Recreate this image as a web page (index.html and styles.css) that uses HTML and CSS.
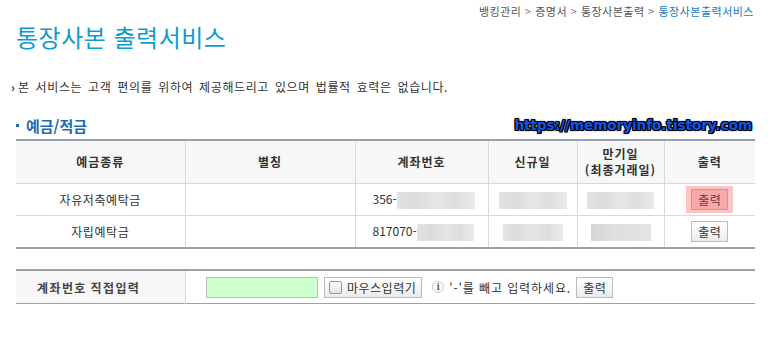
FILE: index.html
```html
<!DOCTYPE html>
<html lang="ko">
<head>
    <meta charset="UTF-8">
    <meta name="viewport" content="width=device-width, initial-scale=1.0">
    <link rel="stylesheet" href="styles.css">
    <title>통장사본 출력서비스</title>
</head>
<body>
    <div class="page">
        <!-- 경로 -->
        <div class="breadcrumb">
            뱅킹관리 <span class="sep">&gt;</span> 증명서 <span class="sep">&gt;</span> 통장사본출력 <span class="sep">&gt;</span> <span class="current">통장사본출력서비스</span>
        </div>

        <h1 class="title">통장사본 출력서비스</h1>

        <p class="notice"><span class="arrow">›</span>본 서비스는 고객 편의를 위하여 제공해드리고 있으며 법률적 효력은 없습니다.</p>

        <div class="section-head">
            <h2 class="section-title"><span class="dot"></span>예금/적금</h2>
            <span class="watermark">https://memoryinfo.tistory.com</span>
        </div>

        <!-- 계좌 목록 -->
        <table class="account-table">
            <colgroup>
                <col style="width:169px">
                <col style="width:170px">
                <col style="width:133px">
                <col style="width:89px">
                <col style="width:87px">
                <col>
            </colgroup>
            <thead>
                <tr>
                    <th>예금종류</th>
                    <th>별칭</th>
                    <th>계좌번호</th>
                    <th>신규일</th>
                    <th>만기일<br>(최종거래일)</th>
                    <th>출력</th>
                </tr>
            </thead>
            <tbody>
                <tr>
                    <td>자유저축예탁금</td>
                    <td></td>
                    <td class="acct">356-<span class="blur" style="width:78px"></span></td>
                    <td><span class="blur" style="width:68px"></span></td>
                    <td><span class="blur" style="width:67px"></span></td>
                    <td><span class="hilite"><button type="button" class="btn btn-on">출력</button></span></td>
                </tr>
                <tr>
                    <td>자립예탁금</td>
                    <td></td>
                    <td class="acct">817070-<span class="blur" style="width:57px"></span></td>
                    <td><span class="blur" style="width:60px"></span></td>
                    <td><span class="blur dark" style="width:60px"></span></td>
                    <td><button type="button" class="btn">출력</button></td>
                </tr>
            </tbody>
        </table>

        <!-- 직접입력 -->
        <table class="direct-table">
            <tr>
                <th>계좌번호 직접입력</th>
                <td>
                    <div class="direct-row">
                        <input type="text" class="acct-input">
                        <label class="btn mouse-btn"><span class="check"></span>마우스입력기</label>
                        <span class="info">i</span>
                        <span class="hint">'-'를 빼고 입력하세요.</span>
                        <button type="button" class="btn">출력</button>
                    </div>
                </td>
            </tr>
        </table>
    </div>
</body>
</html>
```

FILE: styles.css
```css
body {
    margin: 0;
    padding: 0;
    background-color: #fff;
    font-family: "Noto Sans CJK KR", "Noto Sans", sans-serif;
    color: #333;
}

.page {
    width: 739px;
    padding: 0 17px 0 16px;
}

.breadcrumb {
    height: 20px;
    line-height: 20px;
    padding-top: 1px;
    padding-right: 1px;
    text-align: right;
    font-size: 11px;
    letter-spacing: 0.5px;
    color: #555;
}

.breadcrumb .sep {
    color: #777;
}

.breadcrumb .current {
    color: #1a78b8;
}

.title {
    margin: 0;
    font-size: 24px;
    font-weight: normal;
    letter-spacing: 0.5px;
    line-height: 32px;
    color: #0c9ccf;
}

.notice {
    margin: 26px 0 0 -5px;
    font-size: 12px;
    line-height: 16px;
    letter-spacing: 0.6px;
    word-spacing: 2px;
    color: #333;
}

.notice .arrow {
    display: inline-block;
    width: 7px;
    font-weight: bold;
}

.section-head {
    display: flex;
    justify-content: space-between;
    align-items: center;
    margin-top: 19px;
    height: 22px;
}

.section-title {
    margin: 0;
    font-size: 15px;
    font-weight: bold;
    color: #1d6cb4;
    display: flex;
    align-items: center;
}

.section-title .dot {
    width: 3px;
    height: 3px;
    background-color: #1d6cb4;
    margin-right: 7px;
}

.watermark {
    font-family: "DejaVu Sans", sans-serif;
    font-weight: bold;
    font-size: 13.5px;
    color: #0a56f0;
    margin-right: 3px;
    text-shadow: 1px 0 0 #000, -1px 0 0 #000, 0 1px 0 #000, 0 -1px 0 #000,
                 1px 1px 0 #000, -1px -1px 0 #000, 1px -1px 0 #000, -1px 1px 0 #000,
                 0 0 3px #000;
}

table {
    width: 100%;
    border-collapse: collapse;
    table-layout: fixed;
}

.account-table {
    margin-top: 3px;
    border-top: 2px solid #99a1ad;
    border-bottom: 2px solid #99a1ad;
}

.account-table th {
    height: 40px;
    background-color: #f7f7f7;
    font-size: 12px;
    font-weight: bold;
    letter-spacing: 1px;
    line-height: 16px;
    color: #333;
    border-left: 1px solid #d5d9de;
    border-bottom: 1px solid #d5d9de;
}

.account-table td {
    height: 31px;
    padding: 0;
    text-align: center;
    font-size: 12px;
    letter-spacing: 0.6px;
    border-left: 1px solid #d5d9de;
    border-bottom: 1px solid #d5d9de;
}

.account-table th:first-child,
.account-table td:first-child {
    border-left: none;
}

.account-table tr:last-child td {
    border-bottom: none;
}

.account-table td.acct {
    text-align: left;
    padding-left: 17px;
    letter-spacing: 0;
}

.blur {
    display: inline-block;
    height: 17px;
    vertical-align: middle;
    background: linear-gradient(90deg, #e2e2e5 0%, #dcdcdf 25%, #e6e6e8 50%, #dedee1 75%, #ebebed 100%);
}

.blur.dark {
    background: linear-gradient(90deg, #d5d5d8 0%, #dfdfe2 40%, #e4e4e6 100%);
}

.btn {
    display: inline-flex;
    align-items: center;
    justify-content: center;
    box-sizing: border-box;
    height: 21px;
    padding: 0 6px;
    border: 1px solid #bcbcbc;
    background: linear-gradient(#ffffff, #ececec);
    font-family: "Noto Sans CJK KR", sans-serif;
    font-size: 12px;
    letter-spacing: 0.5px;
    white-space: nowrap;
    color: #333;
    cursor: pointer;
}

.hilite {
    display: inline-block;
    padding: 3px 5px;
    background-color: #ffc3c3;
    vertical-align: middle;
}

.btn-on {
    background: #f7a9a9;
    border-color: #d49090;
    color: #6e3a3a;
}

.direct-table {
    margin-top: 20px;
    border-top: 2px solid #99a1ad;
    border-bottom: 1px solid #99a1ad;
}

.direct-table th {
    width: 148px;
    height: 32px;
    padding: 0 0 0 21px;
    text-align: left;
    background-color: #f7f7f7;
    border-right: 1px solid #d5d9de;
    font-size: 12px;
    font-weight: bold;
    letter-spacing: 1.4px;
    word-spacing: -1px;
    color: #444;
}

.direct-table td {
    padding: 0 0 0 20px;
}

.direct-row {
    display: flex;
    align-items: center;
    font-size: 12px;
}

.acct-input {
    box-sizing: border-box;
    width: 112px;
    height: 21px;
    margin: 0;
    border: 1px solid #bcbcbc;
    background-color: #ccffcc;
}

.mouse-btn {
    margin-left: 6px;
    padding: 0 5px 0 4px;
    letter-spacing: 0.5px;
}

.check {
    flex-shrink: 0;
    width: 11px;
    height: 11px;
    border: 1px solid #999;
    border-radius: 2px;
    background: linear-gradient(#fff, #e2e2e2);
    margin-right: 5px;
}

.info {
    box-sizing: border-box;
    width: 12px;
    height: 12px;
    margin-left: 10px;
    border: 1px solid #c8c8c8;
    border-radius: 50%;
    font-family: "DejaVu Serif", serif;
    font-size: 9px;
    font-weight: bold;
    line-height: 10px;
    text-align: center;
    color: #666;
}

.hint {
    margin: 0 5px 0 5px;
    letter-spacing: 0.9px;
    color: #333;
}
```
